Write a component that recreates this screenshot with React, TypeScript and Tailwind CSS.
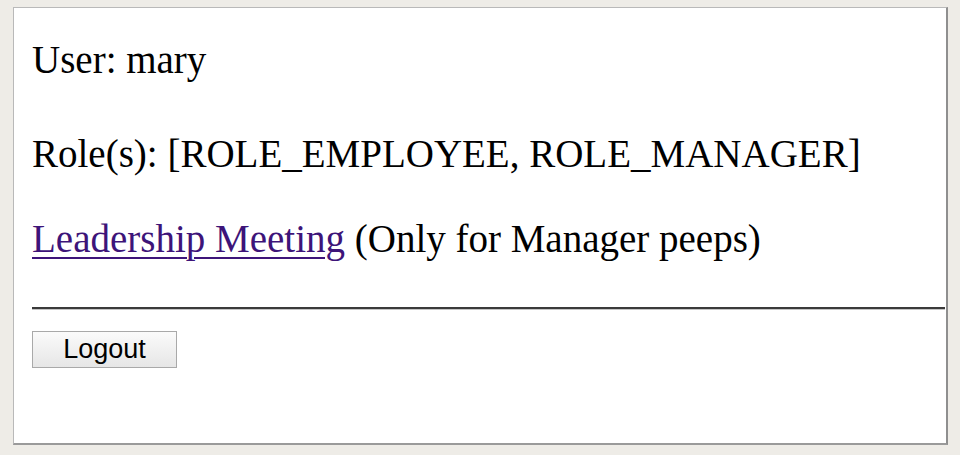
export default function App() {
  return (
    <div className="h-[455px] w-[960px] overflow-hidden bg-[#eeece7] pl-[13px] pt-[7px]">
      <div className="flex h-[438px] w-[935px] flex-col border border-[#b9b9b9] border-r-2 border-r-[#8f8f8f] border-b-2 border-b-[#9a9a9a] bg-white pl-[18px] pt-[30px] font-['Liberation_Serif',serif] text-[39px] leading-[44px] text-black">
        <p>User: mary</p>
        <p className="mt-[50px]">Role(s): [ROLE_EMPLOYEE, ROLE_MANAGER]</p>
        <p className="mt-[41px]">
          <a href="#" className="text-[#3d1479] underline decoration-[2px] underline-offset-[5px]">
            Leadership Meeting
          </a>{' '}
          (Only for Manager peeps)
        </p>
        <div className="mt-[46px] mr-px h-[3px] border-t-2 border-b border-t-[#3a3a3a] border-b-[#c4c4c4]" />
        <div className="mt-[13px]">
          <button
            type="button"
            className="h-[37px] w-[145px] border border-[#a9a9a9] bg-gradient-to-b from-[#fbfbfb] to-[#e6e6e6] font-['Liberation_Sans',sans-serif] text-[27px] leading-none text-black"
          >
            Logout
          </button>
        </div>
      </div>
    </div>
  )
}
